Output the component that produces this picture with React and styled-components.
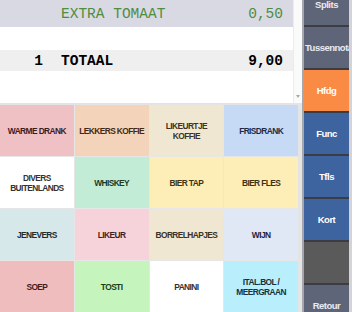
import React from "react";
import styled, { createGlobalStyle } from "styled-components";

const GlobalStyle = createGlobalStyle`
   html, body {
      margin: 0;
      padding: 0;
      background: #ffffff;
   }
   body {
      font-family: "Liberation Sans", Arial, sans-serif;
   }
`;

const Screen = styled.div`
   display: flex;
   width: 352px;
   height: 312px;
   overflow: hidden;
   background: #e4e4e4;
`;

const LeftSide = styled.div`
   display: flex;
   flex-direction: column;
   width: 302px;
   flex-shrink: 0;
`;

const Receipt = styled.div`
   display: flex;
   height: 104px;
   background: #ffffff;
`;

const Lines = styled.div`
   display: flex;
   flex-direction: column;
   width: 294px;
`;

const Line = styled.div`
   display: flex;
   align-items: center;
   height: ${(p) => p.h}px;
   padding-right: 10px;
   padding-top: 1px;
   background: ${(p) => p.bg || "#ffffff"};
   color: ${(p) => p.color || "#000000"};
   font-family: "Liberation Mono", "Courier New", monospace;
   font-size: 14.5px;
   font-weight: ${(p) => (p.bold ? 700 : 400)};
   white-space: pre;
`;

const Qty = styled.span`
   width: 43px;
   text-align: right;
   margin-right: 18px;
`;

const Name = styled.span`
   flex: 1;
`;

const Scrollbar = styled.div`
   position: relative;
   width: 8px;
   background: #fafafa;
   border-left: 1px solid #ececec;
`;

const ScrollArrow = styled.div`
   position: absolute;
   left: 2px;
   bottom: 5px;
   width: 0;
   height: 0;
   border-left: 2px solid transparent;
   border-right: 2px solid transparent;
   border-top: 3px solid #a8a8a8;
`;

const Grid = styled.div`
   display: grid;
   grid-template-columns: repeat(4, 1fr);
   grid-auto-rows: 51px;
   gap: 1px;
   width: 298px;
   margin-top: 2px;
   background: #e6e6e6;
`;

const Tile = styled.div`
   display: flex;
   align-items: center;
   justify-content: center;
   text-align: center;
   background: ${(p) => p.bg};
   color: ${(p) => p.fg};
   font-family: "Liberation Sans", Arial, sans-serif;
   font-size: 8.4px;
   font-weight: 700;
   letter-spacing: -0.6px;
   line-height: 10px;
   white-space: pre;
   overflow: hidden;
`;

const Divider = styled.div`
   width: 2px;
   flex-shrink: 0;
   background: #a4a7ad;
`;

const SidePanel = styled.div`
   display: flex;
   flex-direction: column;
   width: 48px;
   flex-shrink: 0;
   background: #d4d4d8;
   overflow: hidden;
`;

const ButtonStack = styled.div`
   display: flex;
   flex-direction: column;
   gap: 2px;
   width: 45px;
   margin-top: -16px;
   background: #3c3c44;
`;

const SideButton = styled.div`
   height: 41px;
   flex-shrink: 0;
   display: flex;
   align-items: center;
   justify-content: center;
   overflow: hidden;
   background: ${(p) => p.bg};
   color: ${(p) => p.fg || "#ffffff"};
   font-family: "Liberation Sans", Arial, sans-serif;
   font-size: 9.5px;
   font-weight: 700;
   letter-spacing: -0.5px;
   white-space: nowrap;
`;

const Label = styled.span`
   display: block;
   width: 100%;
   text-align: ${(p) => (p.wide ? "left" : "center")};
   padding-left: ${(p) => (p.wide ? "1px" : "0")};
   overflow: hidden;
`;

const tiles = [
   { label: "WARME DRANK", bg: "#efc1c5", fg: "#3d1b1d" },
   { label: "LEKKERS KOFFIE", bg: "#f3d3b9", fg: "#432816" },
   { label: "LIKEURTJE\nKOFFIE", bg: "#f0e7d2", fg: "#3b3326" },
   { label: "FRISDRANK", bg: "#c6d9f5", fg: "#1c2b45" },
   { label: "DIVERS\nBUITENLANDS", bg: "#ffffff", fg: "#333333" },
   { label: "WHISKEY", bg: "#c3ecd6", fg: "#173a24" },
   { label: "BIER TAP", bg: "#fdeeb7", fg: "#3d3314" },
   { label: "BIER FLES", bg: "#fdeeb7", fg: "#3d3314" },
   { label: "JENEVERS", bg: "#d7e8ea", fg: "#1f2c2e" },
   { label: "LIKEUR", bg: "#f6d3da", fg: "#451c22" },
   { label: "BORRELHAPJES", bg: "#efe7d1", fg: "#3b3326" },
   { label: "WIJN", bg: "#e0e7f5", fg: "#1f2436" },
   { label: "SOEP", bg: "#efbdbd", fg: "#461b1b" },
   { label: "TOSTI", bg: "#c5f5bd", fg: "#1b3d17" },
   { label: "PANINI", bg: "#ffffff", fg: "#333333" },
   { label: "ITAL.BOL /\nMEERGRAAN", bg: "#b9eefc", fg: "#17313d" },
];

const sideButtons = [
   { label: "Splits", bg: "#5f6579", fg: "#e9ebf2" },
   { label: "Tussennota", bg: "#5f6579", fg: "#e9ebf2", wide: true },
   { label: "Hfdg", bg: "#f98b45" },
   { label: "Func", bg: "#3e64a0" },
   { label: "Tfls", bg: "#3e64a0" },
   { label: "Kort", bg: "#3e64a0" },
   { label: "", bg: "#5a5a5a" },
   { label: "Retour", bg: "#5f6579", fg: "#e9ebf2" },
];

export default function App() {
   return (
      <>
         <GlobalStyle />
         <Screen>
            <LeftSide>
               <Receipt>
                  <Lines>
                     <Line h={26} bg="#d9d9e4" color="#4f8d3f">
                        <Qty></Qty>
                        <Name>EXTRA TOMAAT</Name>
                        <span>0,50</span>
                     </Line>
                     <Line h={22}></Line>
                     <Line h={20} bg="#efefef" bold>
                        <Qty>1</Qty>
                        <Name>TOTAAL</Name>
                        <span>9,00</span>
                     </Line>
                  </Lines>
                  <Scrollbar>
                     <ScrollArrow />
                  </Scrollbar>
               </Receipt>
               <Grid>
                  {tiles.map((t) => (
                     <Tile key={t.label} bg={t.bg} fg={t.fg}>
                        {t.label}
                     </Tile>
                  ))}
               </Grid>
            </LeftSide>
            <Divider />
            <SidePanel>
               <ButtonStack>
                  {sideButtons.map((b, i) => (
                     <SideButton key={i} bg={b.bg} fg={b.fg}>
                        <Label wide={b.wide}>{b.label}</Label>
                     </SideButton>
                  ))}
               </ButtonStack>
            </SidePanel>
         </Screen>
      </>
   );
}
